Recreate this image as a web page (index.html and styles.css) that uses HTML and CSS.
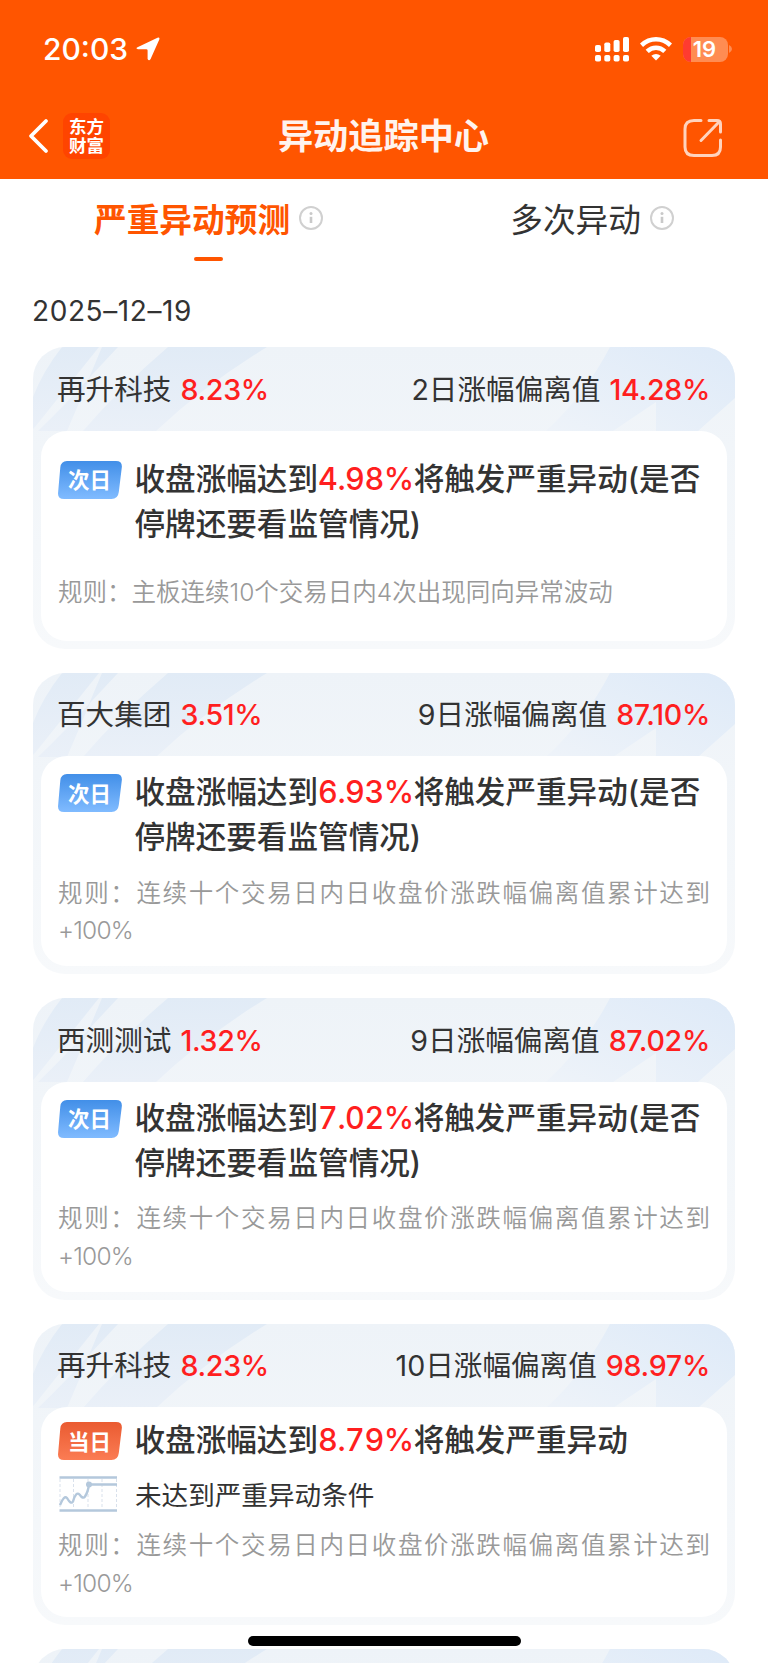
FILE: index.html
```html
<!DOCTYPE html>
<html lang="zh-CN">
<head>
    <meta charset="UTF-8">
    <title>异动追踪中心</title>
    <link rel="stylesheet" href="styles.css">
</head>
<body>
    <svg class="defs" width="0" height="0">
        <defs>
            <linearGradient id="artLeft" x1="0" y1="0" x2="0" y2="1">
                <stop offset="0" stop-color="#e1ebf6"/>
                <stop offset="1" stop-color="#eaf0f8"/>
            </linearGradient>
            <linearGradient id="artRight" x1="1" y1="0" x2="0" y2="1">
                <stop offset="0" stop-color="#deeaf8"/>
                <stop offset="1" stop-color="#eef3f9"/>
            </linearGradient>
            <linearGradient id="blue" x1="0" y1="0" x2="0" y2="1">
                <stop offset="0" stop-color="#428fe8"/>
                <stop offset="1" stop-color="#80bbff"/>
            </linearGradient>
            <linearGradient id="orange" x1="0" y1="0" x2="0" y2="1">
                <stop offset="0" stop-color="#ea5b31"/>
                <stop offset="1" stop-color="#fb7c54"/>
            </linearGradient>
        </defs>
        <symbol id="art" viewBox="0 0 702 84">
            <path d="M29 0H66L2 80L0 82V50Q10 24 29 0Z" fill="url(#artLeft)"/>
            <path d="M69 0H85L57 30L34 84H5Q34 56 56 31Z" fill="url(#artLeft)"/>
            <path d="M135 0H234Q172 38 123 84H50Q86 42 135 0Z" fill="url(#artLeft)"/>
            <path d="M577 0H702V51L665 84H623V55L580 84H513Q552 48 577 0Z" fill="url(#artRight)"/>
        </symbol>
        <symbol id="info" viewBox="0 0 24 24">
            <circle cx="12" cy="12" r="11" fill="none" stroke="#d0d0d0" stroke-width="2"/>
            <circle cx="12" cy="7.5" r="1.5" fill="#c9c9c9"/>
            <path d="M12 10.8V17" stroke="#c9c9c9" stroke-width="2.6"/>
        </symbol>
        <symbol id="tag" viewBox="0 0 64 38">
            <path d="M9 0H58Q64.600 0 63.800 6.500L60.800 31Q60 38 53.500 38H6Q-.6 38 .1 31.500L2.300 6.500Q3 0 9 0Z"/>
        </symbol>
    </svg>

    <div class="screen">
        <header class="header">
            <div class="status">
                <span class="time">20:03</span>
                <svg class="locate" width="24" height="24" viewBox="0 0 24 24">
                    <path d="M1.500 10.200L21.500 .7Q24 0 23.300 2.500L14.600 22Q13 24.600 11.600 22V13.600Q11.600 12.300 10.300 12.300H2Q-.8 11.600 1.500 10.200Z" fill="#fff"/>
                </svg>
                <svg class="signal" width="35" height="25" viewBox="0 0 35 25" fill="#fff">
                    <rect x="0" y="8" width="6" height="7" rx="1.800"/>
                    <rect x="9.300" y="5.500" width="6" height="9.500" rx="1.800"/>
                    <rect x="18.600" y="3" width="6" height="12" rx="1.800"/>
                    <rect x="28" y="0" width="6" height="15" rx="1.800"/>
                    <rect x="0" y="18" width="6" height="6.500" rx="1.800"/>
                    <rect x="9.300" y="18" width="6" height="6.500" rx="1.800"/>
                    <rect x="18.600" y="18" width="6" height="6.500" rx="1.800"/>
                    <rect x="28" y="18" width="6" height="6.500" rx="1.800"/>
                </svg>
                <svg class="wifi" width="32" height="24" viewBox="0 0 32 24">
                    <path d="M1.500 8.200Q8 2.300 16 2.300T30.500 8.200M7.200 14.400Q11 10.800 16 10.800T24.800 14.400" fill="none" stroke="#fff" stroke-width="4.600"/>
                    <path d="M16 23.500L11.300 18.800Q16 15 20.700 18.800Z" fill="#fff"/>
                </svg>
                <div class="battery"><span class="battery-level"></span><span class="battery-num">19</span></div>
                <svg class="battery-cap" width="4" height="8" viewBox="0 0 4 8"><path d="M0 0Q3 1.500 3 4T0 8Z" fill="#ff8c52"/></svg>
            </div>
            <div class="nav">
                <svg class="back" width="21" height="36" viewBox="0 0 21 36">
                    <path d="M18 3L3 18L18 33" fill="none" stroke="#fff" stroke-width="3.800" stroke-linecap="round" stroke-linejoin="round"/>
                </svg>
                <div class="logo">东方<br>财富</div>
                <h1 class="title">异动追踪中心</h1>
                <svg class="share" width="40" height="40" viewBox="0 0 40 40" fill="none" stroke="#ffd3bd" stroke-width="3" stroke-linecap="round">
                    <path d="M18 2.500H11Q2 2.500 2 11V29Q2 37.500 11 37.500H29Q37.500 37.500 37.500 29V22M26 2.500H34Q37.500 2.500 37.500 6V14M36 4L18 22.500"/>
                </svg>
            </div>
        </header>

        <nav class="tabs">
            <div class="tab active">严重异动预测<svg class="info"><use href="#info"/></svg></div>
            <div class="tab">多次异动<svg class="info"><use href="#info"/></svg></div>
        </nav>

        <div class="date">2025–12–19</div>

        <main class="list">
            <section class="card">
                <svg class="art"><use href="#art"/></svg>
                <div class="card-head">
                    <div>再升科技<b class="num">8.23%</b></div>
                    <div>2日涨幅偏离值<b class="num">14.28%</b></div>
                </div>
                <div class="card-body roomy">
                    <div class="row">
                        <div class="tag"><svg class="tag-bg" fill="url(#blue)"><use href="#tag"/></svg><span>次日</span></div>
                        <div class="text">收盘涨幅达到<b>4.98%</b>将触发严重异动(是否停牌还要看监管情况)</div>
                    </div>
                    <p class="rule">规则：主板连续10个交易日内4次出现同向异常波动</p>
                </div>
            </section>

            <section class="card">
                <svg class="art"><use href="#art"/></svg>
                <div class="card-head">
                    <div>百大集团<b class="num">3.51%</b></div>
                    <div>9日涨幅偏离值<b class="num">87.10%</b></div>
                </div>
                <div class="card-body">
                    <div class="row">
                        <div class="tag"><svg class="tag-bg" fill="url(#blue)"><use href="#tag"/></svg><span>次日</span></div>
                        <div class="text">收盘涨幅达到<b>6.93%</b>将触发严重异动(是否停牌还要看监管情况)</div>
                    </div>
                    <p class="rule">规则：连续十个交易日内日收盘价涨跌幅偏离值累计达到<span class="pct">+100%</span></p>
                </div>
            </section>

            <section class="card">
                <svg class="art"><use href="#art"/></svg>
                <div class="card-head">
                    <div>西测测试<b class="num">1.32%</b></div>
                    <div>9日涨幅偏离值<b class="num">87.02%</b></div>
                </div>
                <div class="card-body">
                    <div class="row">
                        <div class="tag"><svg class="tag-bg" fill="url(#blue)"><use href="#tag"/></svg><span>次日</span></div>
                        <div class="text">收盘涨幅达到<b>7.02%</b>将触发严重异动(是否停牌还要看监管情况)</div>
                    </div>
                    <p class="rule">规则：连续十个交易日内日收盘价涨跌幅偏离值累计达到<span class="pct">+100%</span></p>
                </div>
            </section>

            <section class="card">
                <svg class="art"><use href="#art"/></svg>
                <div class="card-head">
                    <div>再升科技<b class="num">8.23%</b></div>
                    <div>10日涨幅偏离值<b class="num">98.97%</b></div>
                </div>
                <div class="card-body tight">
                    <div class="row">
                        <div class="tag"><svg class="tag-bg" fill="url(#orange)"><use href="#tag"/></svg><span>当日</span></div>
                        <div class="text">收盘涨幅达到<b>8.79%</b>将触发严重异动</div>
                    </div>
                    <div class="row state">
                        <svg class="chart" width="60" height="36" viewBox="0 0 60 36" fill="none">
                            <path d="M2 3V33M15.500 3V33M30 3V33M44 3V33M58.500 3V33" stroke="#d9e1ec" stroke-dasharray="3 2"/>
                            <path d="M1.500 1.500H59M1.500 34.500H59" stroke="#b4c8dc" stroke-width="2.400"/>
                            <path d="M2 29Q6 19 9 22Q13 29 15 25.500Q18 15 21.500 18.500Q25 23.500 27 20.500Q30 16 31 8.500H59" stroke="#b4c8dc" stroke-width="2.400"/>
                            <circle cx="31" cy="8.500" r="3" fill="#b4c8dc"/>
                        </svg>
                        <div class="state-text">未达到严重异动条件</div>
                    </div>
                    <p class="rule">规则：连续十个交易日内日收盘价涨跌幅偏离值累计达到<span class="pct">+100%</span></p>
                </div>
            </section>

            <section class="card">
                <svg class="art"><use href="#art"/></svg>
            </section>
        </main>

        <div class="home-bar"></div>
    </div>
</body>
</html>
```
FILE: styles.css
```css
* {
    box-sizing: border-box;
}
body {
    margin: 0;
    background: #fff;
    color: #333;
    font-family: Inter, "Noto Sans CJK SC", sans-serif;
}
svg {
    display: block;
    flex-shrink: 0;
}
.defs {
    position: absolute;
}
.screen {
    position: relative;
    width: 768px;
    height: 1663px;
    overflow: hidden;
}

/* header */
.header {
    height: 179px;
    background: #ff5500;
    color: #fff;
}
.status {
    display: flex;
    align-items: center;
    height: 98px;
    padding: 0 36px 0 43px;
}
.time {
    width: 93px;
    font-size: 30px;
    font-weight: 500;
}
.signal {
    margin-left: auto;
}
.wifi {
    margin: 0 11px 0 10px;
}
.battery {
    display: flex;
    justify-content: center;
    align-items: center;
    position: relative;
    width: 45px;
    height: 25px;
    border-radius: 8px;
    overflow: hidden;
    background: #ff8c52;
}
.battery-cap {
    margin-left: 1px;
    margin-right: -1px;
}
.battery-level {
    position: absolute;
    left: 0;
    top: 0;
    width: 8px;
    height: 25px;
    background: #ff3b30;
}
.battery-num {
    position: relative;
    margin-right: 2px;
    font-size: 22px;
    font-weight: 600;
}
.nav {
    display: flex;
    align-items: center;
    height: 76px;
    padding: 0 45px 0 28px;
}
.logo {
    width: 47px;
    height: 46px;
    margin-left: 14px;
    padding-top: 3px;
    border-radius: 9px;
    background: #ff4400;
    font-family: "Noto Sans CJK SC", sans-serif;
    font-size: 17.5px;
    font-weight: 700;
    line-height: 19px;
    text-align: center;
}
.title {
    flex: 1;
    margin: 0 26px 0 0;
    color: #fff3ee;
    font-size: 35.2px;
    font-weight: 700;
    line-height: 50px;
    text-align: center;
}
.share {
    margin-top: 4px;
}

/* tabs */
.tabs {
    display: flex;
    justify-content: space-between;
    padding: 14px 94px 0;
    height: 101px;
}
.tab {
    display: flex;
    align-items: center;
    position: relative;
    height: 48px;
    font-size: 32.7px;
}
.active {
    color: #ff5500;
    font-weight: 700;
}
.active::after {
    content: "";
    position: absolute;
    left: 100px;
    bottom: -20px;
    width: 29px;
    height: 4px;
    border-radius: 2px;
    background: #ff5500;
}
.info {
    width: 24px;
    height: 24px;
    margin: 2px 0 1px 9px;
}
.date {
    padding-left: 32px;
    height: 67px;
    font-size: 28px;
    letter-spacing: 0.6px;
    line-height: 63px;
}

/* cards */
.list {
    display: flex;
    flex-direction: column;
    gap: 24px;
    padding: 0 33px;
}
.card {
    position: relative;
    flex-shrink: 0;
    height: 301.5px;
    padding: 0 8px 8px;
    border-radius: 32px;
    overflow: hidden;
    background: linear-gradient(#eef3f8, #f7f9fb);
}
.art {
    position: absolute;
    left: 0;
    top: 0;
    width: 702px;
    height: 84px;
}
.card-head {
    display: flex;
    justify-content: space-between;
    align-items: center;
    position: relative;
    height: 83.5px;
    padding: 0 17px 3px 16px;
    font-size: 28.6px;
}
.num {
    margin-left: 9px;
    color: #ff1f1f;
    font-weight: 500;
    letter-spacing: -0.3px;
}
.card-body {
    position: relative;
    height: 210px;
    padding: 13px 17px 0;
    border-radius: 26px;
    background: #fff;
}
.row {
    display: flex;
    align-items: flex-start;
}
.tag {
    display: flex;
    justify-content: center;
    align-items: center;
    position: relative;
    width: 64px;
    height: 38px;
    margin: 5px 13px 0 0;
    color: #fff;
    font-size: 21.5px;
    font-weight: 700;
}
.tag-bg {
    position: absolute;
    left: 0;
    top: 0;
    width: 64px;
    height: 38px;
}
.tag span {
    position: relative;
    padding: 0 1px 2px 0;
}
.text {
    flex: 1;
    margin-left: -0.5px;
    font-size: 30.6px;
    font-weight: 500;
    line-height: 45.4px;
}
.text b {
    color: #ff1f1f;
    font-weight: 500;
    letter-spacing: -0.5px;
    font-variant-numeric: tabular-nums;
}
.rule {
    margin: 15px 0 0;
    color: #999;
    font-size: 24.5px;
    font-weight: 350;
    line-height: 37.5px;
    text-align: justify;
}
.pct {
    letter-spacing: -0.8px;
}
.roomy {
    padding-top: 25px;
}
.roomy .rule {
    margin-top: 28px;
}
.tight {
    padding-top: 10px;
}
.tight .rule {
    margin-top: 10px;
}
.state {
    align-items: center;
    height: 46px;
    margin-top: 9px;
}
.chart {
    margin-right: 17px;
}
.state-text {
    padding-bottom: 2px;
    font-size: 26.6px;
}

.home-bar {
    position: absolute;
    left: 248px;
    bottom: 17px;
    width: 273px;
    height: 10px;
    border-radius: 5px;
    background: #000;
}
```
